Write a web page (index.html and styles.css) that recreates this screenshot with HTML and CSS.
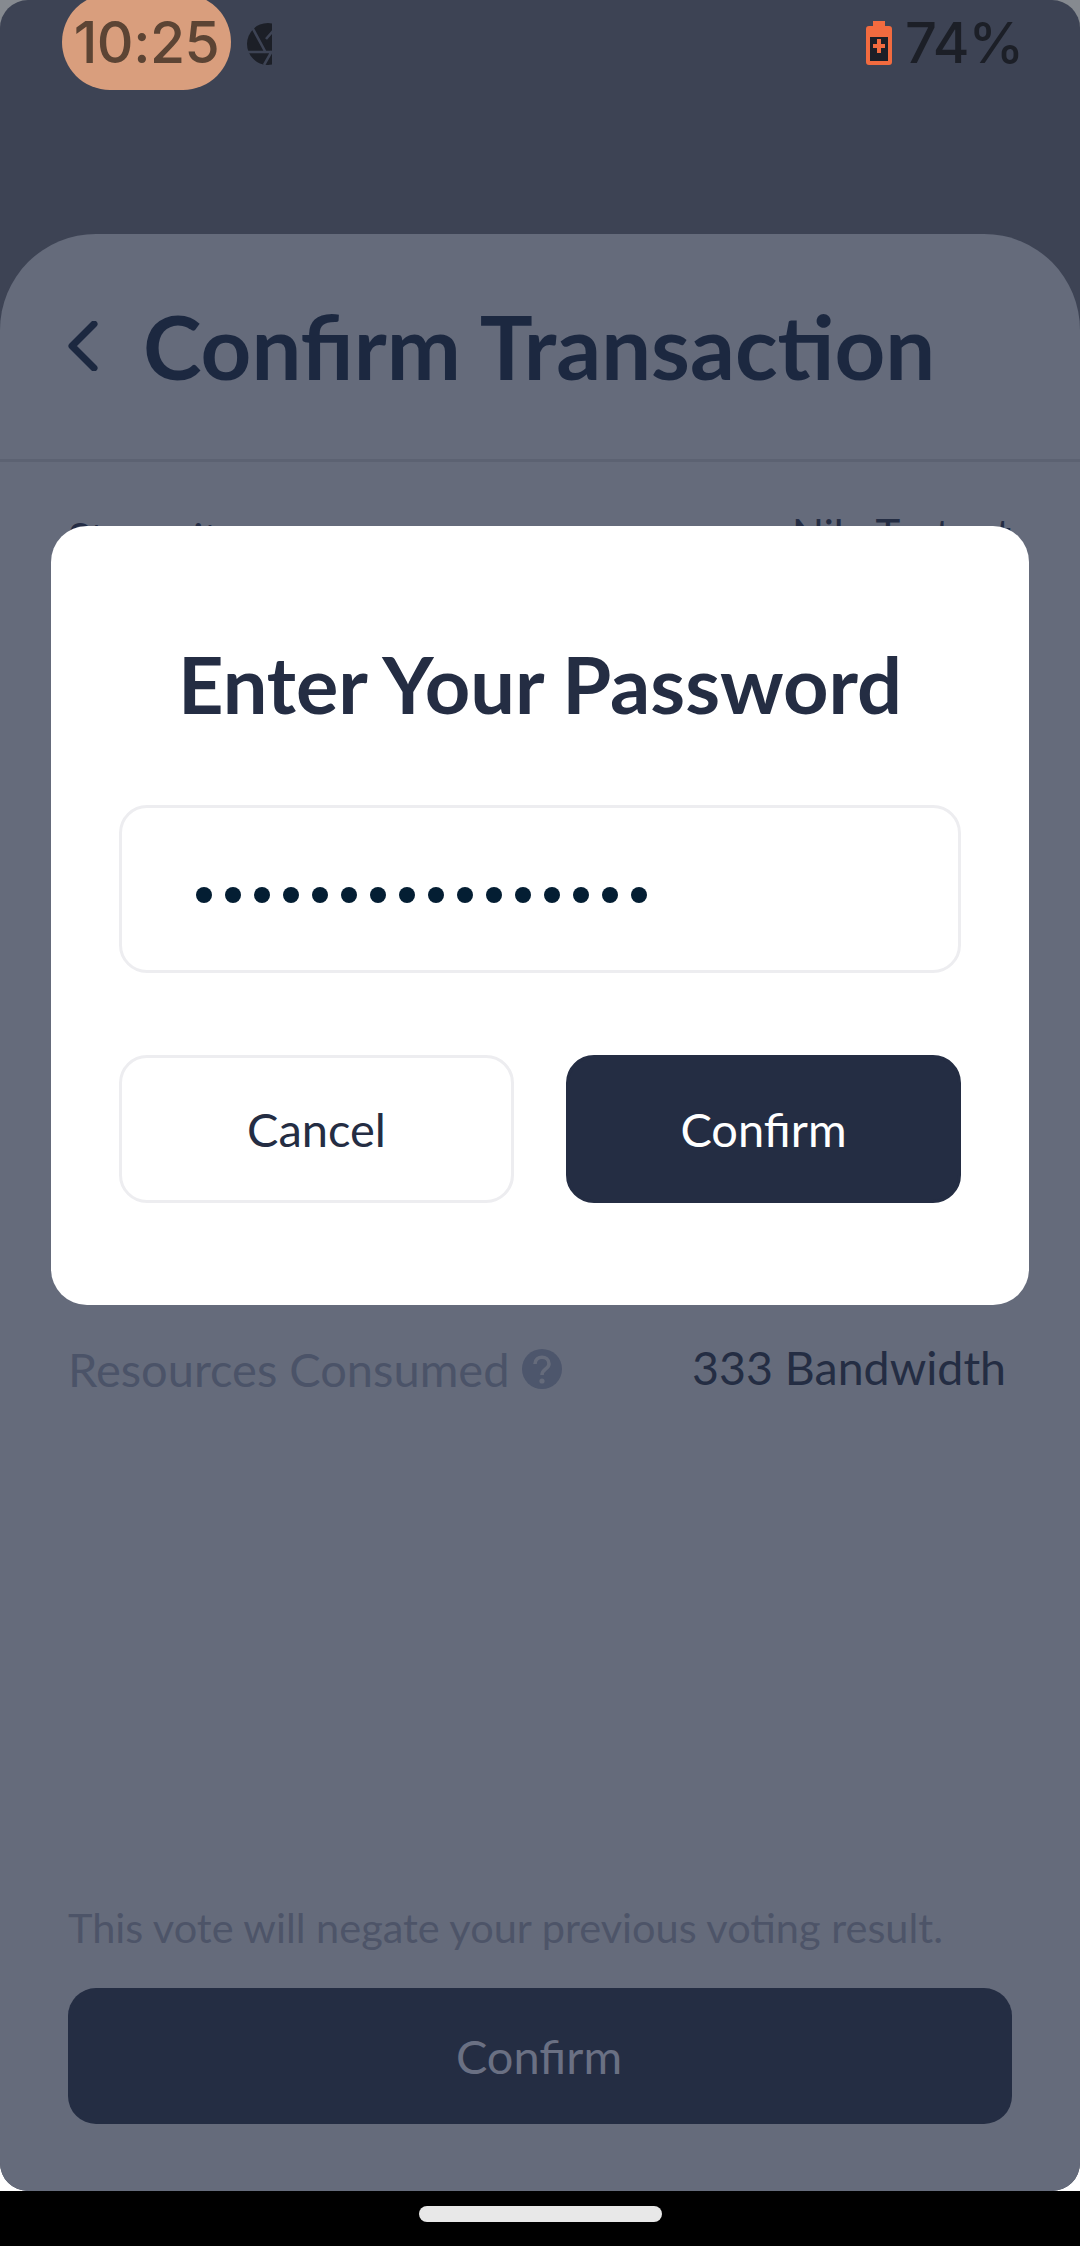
FILE: index.html
```html
<!DOCTYPE html>
<html lang="en">
<head>
<meta charset="utf-8">
<title>Confirm Transaction</title>
<link rel="stylesheet" href="styles.css">
</head>
<body>
<div class="screen">
  <div class="app">
    <header class="status">
      <div class="clock">10:25</div>
      <svg class="shutter" viewBox="0 0 25 42" width="25" height="42">
        <circle cx="21" cy="21" r="21" fill="#1c1f27"/>
        <path d="M5 4 L19 30 M0 29 H24 M17 42 L25 28 M19 16 L26 8" stroke="#3d4354" stroke-width="2.6" fill="none"/>
      </svg>
      <div class="status-right">
        <svg class="battery" viewBox="0 0 26 44" width="26" height="44">
          <path d="M7 0 H19 V5 H23 Q26 5 26 8 V41 Q26 44 23 44 H3 Q0 44 0 41 V8 Q0 5 3 5 H7 Z" fill="#f26b3f"/>
          <rect x="4" y="16" width="18" height="24" fill="#1c1f27"/>
          <path d="M11 18 H15 V23 H19 V27 H15 V32 H11 V27 H7 V23 H11 Z" fill="#f26b3f"/>
        </svg>
        <span class="pct">74%</span>
      </div>
    </header>
    <main class="sheet">
      <div class="head">
        <svg class="back" viewBox="0 0 30 50" width="30" height="50">
          <path d="M26 3 L4 25 L26 47" stroke="#1c2840" stroke-width="7" fill="none" stroke-linecap="round" stroke-linejoin="round"/>
        </svg>
        <h1 class="title">Confirm Transaction</h1>
      </div>
      <div class="content">
        <div class="row first">
          <span class="peek-label">Steam it</span>
          <span class="value">Nile Testnet</span>
        </div>
        <div class="row resources">
          <span class="label">Resources Consumed
            <svg class="help" viewBox="0 0 40 40" width="40" height="40">
              <circle cx="20" cy="20" r="20" fill="#4d566c"/>
              <path d="M13 15 C13 6 27 6 27 15 C27 20 20 20 20 26" stroke="#656b7b" stroke-width="3.6" fill="none"/>
              <circle cx="20" cy="32" r="2.6" fill="#656b7b"/>
            </svg>
          </span>
          <span class="value">333 Bandwidth</span>
        </div>
      </div>
      <p class="note">This vote will negate your previous voting result.</p>
      <button class="submit">Confirm</button>
    </main>
    <section class="modal">
      <h2 class="modal-title">Enter Your Password</h2>
      <div class="field">
        <i></i><i></i><i></i><i></i><i></i><i></i><i></i><i></i><i></i><i></i><i></i><i></i><i></i><i></i><i></i><i></i>
      </div>
      <div class="actions">
        <button class="btn cancel">Cancel</button>
        <button class="btn ok">Confirm</button>
      </div>
    </section>
  </div>
  <footer class="nav"><div class="handle"></div></footer>
</div>
</body>
</html>
```
FILE: styles.css
```css
* { box-sizing: border-box; }
html, body { margin: 0; padding: 0; }
body { font-family: Lato, "Noto Sans", sans-serif; }
.screen {
  width: 1080px; height: 2246px; display: flex; flex-direction: column; overflow: hidden;
  background: linear-gradient(#868a90 0 400px, #fff 400px);
}
.app {
  position: relative; flex: 1; display: flex; flex-direction: column;
  background: #3d4354; border-radius: 28px; overflow: hidden;
}
.status { height: 234px; flex: none; display: flex; align-items: flex-start; padding-left: 62px; padding-right: 57px; }
.clock {
  width: 169px; height: 96px; margin-top: -6px; border-radius: 48px; background: #d99e7d; color: #5c4434;
  font: 500 57px/98px Inter, Roboto, sans-serif; text-align: center; letter-spacing: -0.5px;
}
.shutter { margin: 23px 0 0 16px; }
.status-right { margin-left: auto; display: flex; align-items: flex-start; gap: 13px; }
.battery { margin-top: 21px; }
.pct { font: 500 56px/86px Inter, Roboto, sans-serif; color: #1c1f27; letter-spacing: -1px; }
.sheet { flex: 1; display: flex; flex-direction: column; background: #656b7b; border-radius: 96px 96px 0 0; padding-bottom: 67px; }
.head { height: 228px; flex: none; display: flex; align-items: center; padding: 0 0 2px 68px; gap: 45px; border-bottom: 3px solid #5c6272; }
.title { margin: 0; font: 700 88.5px/100px Lato, sans-serif; color: #1c2840; }
.content { flex: 1; padding: 0 68px; }
.row { display: flex; justify-content: space-between; align-items: flex-start; font-size: 46.5px; line-height: 60px; height: 60px; }
.first { margin-top: 44px; font-size: 42px; }
.first .value { margin-top: -2px; margin-right: 1px; }
.peek-label { color: #232c44; margin-top: 2px; }
.value { color: #242d43; }
.resources { margin-top: 771px; }
.resources .value { margin-right: 6px; }
.label { color: #4b5368; display: flex; align-items: center; gap: 13px; margin-top: 2px; font-size: 47px; }
.note { margin: 0 68px 36px; font-size: 41.5px; line-height: 50px; color: #4d5468; }
.submit {
  margin: 0 68px; height: 136px; flex: none; border: 0; padding: 0 2px 0 0; border-radius: 28px; background: #242d43;
  color: #6a7083; font: 400 47px Lato, sans-serif;
}
.modal {
  position: absolute; left: 51px; top: 526px; width: 978px; height: 779px; padding: 0 68px;
  background: #fff; border-radius: 36px; display: flex; flex-direction: column;
}
.modal-title { margin: 0; padding-top: 108px; height: 279px; text-align: center; font: 700 79.3px/100px Lato, sans-serif; color: #242d43; white-space: nowrap; }
.field {
  height: 168px; flex: none; border: 3px solid #ededf0; border-radius: 28px; display: flex; align-items: center; gap: 13px; padding: 0 0 0 74px;
}
.field i { width: 16px; height: 16px; border-radius: 50%; background: #041e33; margin-top: 12px; }
.actions { margin-top: 82px; display: flex; gap: 52px; }
.btn { flex: 1; height: 148px; padding: 0; border-radius: 28px; font: 400 47px Lato, sans-serif; }
.cancel { background: #fff; border: 3px solid #ededf0; color: #242d43; }
.ok { background: #242d43; border: 3px solid #242d43; color: #fff; }
.nav { height: 55px; flex: none; background: #000; display: flex; justify-content: center; padding-top: 15px; }
.handle { width: 243px; height: 16px; border-radius: 8px; background: #e8e8e8; }
```
